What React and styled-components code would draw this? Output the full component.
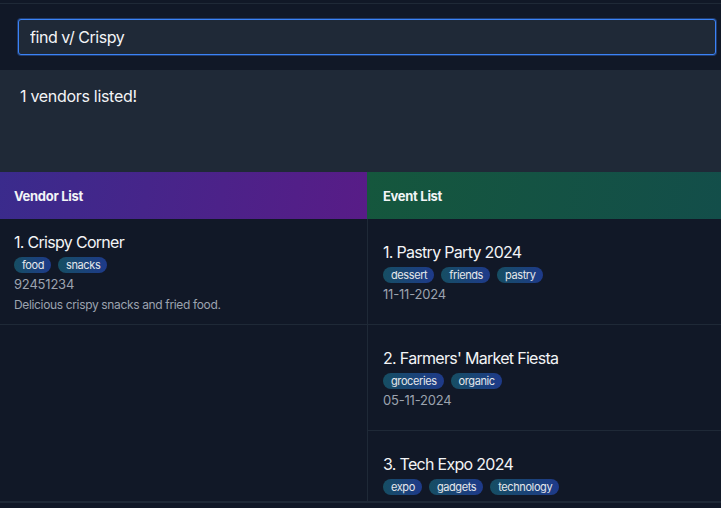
import React from "react";
import styled, { createGlobalStyle } from "styled-components";

const GlobalStyle = createGlobalStyle`
  body {
    margin: 0;
    background: #111827;
    font-family: Inter, "Noto Sans", "Liberation Sans", sans-serif;
  }
  * {
    box-sizing: border-box;
  }
`;

const vendors = [
  {
    name: "Crispy Corner",
    tags: ["food", "snacks"],
    phone: "92451234",
    description: "Delicious crispy snacks and fried food.",
  },
];

const events = [
  { name: "Pastry Party 2024", tags: ["dessert", "friends", "pastry"], date: "11-11-2024" },
  { name: "Farmers' Market Fiesta", tags: ["groceries", "organic"], date: "05-11-2024" },
  { name: "Tech Expo 2024", tags: ["expo", "gadgets", "technology"], date: "15-11-2024" },
];

const App = () => {
  return (
    <>
      <GlobalStyle />
      <Window>
        <MenuStrip />
        <CommandArea>
          <CommandInput defaultValue="find v/ Crispy" />
        </CommandArea>
        <ResultDisplay>1 vendors listed!</ResultDisplay>
        <Lists>
          <Column $width="367px">
            <Header $variant="vendor">Vendor List</Header>
            <CardList>
              {vendors.map((vendor, index) => (
                <Card key={vendor.name}>
                  <Title>
                    {index + 1}. {vendor.name}
                  </Title>
                  <Tags>
                    {vendor.tags.map((tag) => (
                      <Tag key={tag}>{tag}</Tag>
                    ))}
                  </Tags>
                  <Meta>{vendor.phone}</Meta>
                  <Description>{vendor.description}</Description>
                </Card>
              ))}
            </CardList>
          </Column>
          <Column $width="auto" $grow>
            <Header $variant="event">Event List</Header>
            <CardList $divider>
              {events.map((event, index) => (
                <Card key={event.name} $inset>
                  <Title>
                    {index + 1}. {event.name}
                  </Title>
                  <Tags>
                    {event.tags.map((tag) => (
                      <Tag key={tag}>{tag}</Tag>
                    ))}
                  </Tags>
                  <Meta>{event.date}</Meta>
                </Card>
              ))}
            </CardList>
          </Column>
        </Lists>
      </Window>
    </>
  );
};

const Window = styled.div`
  height: 508px;
  display: flex;
  flex-direction: column;
  color: #f3f4f6;
`;

const MenuStrip = styled.div`
  height: 4px;
  border-bottom: 1px solid #1f2937;
`;

const CommandArea = styled.div`
  padding: 15px 5px 15px 18px;
`;

const CommandInput = styled.input`
  display: block;
  width: 100%;
  height: 36px;
  padding: 0 10px 0 11px;
  background: #1f2937;
  border: 1px solid #3b82f6;
  border-radius: 3px;
  color: #f3f4f6;
  font-family: inherit;
  font-size: 16px;
  letter-spacing: -0.45px;
  outline: none;
  box-shadow: 0 0 0 1px rgba(59, 130, 246, 0.35);
`;

const ResultDisplay = styled.div`
  height: 102px;
  padding: 16px 20px;
  background: #1f2937;
  font-size: 16px;
  line-height: 20px;
  letter-spacing: -0.3px;
  color: #f3f4f6;
`;

const Lists = styled.div`
  flex: 1;
  display: flex;
  min-height: 0;
  border-bottom: 2px solid #1f2937;
  margin-bottom: 5px;
`;

const Column = styled.div`
  width: ${(p) => p.$width};
  flex: ${(p) => (p.$grow ? 1 : "none")};
  display: flex;
  flex-direction: column;
  min-height: 0;
`;

const Header = styled.div`
  height: 47px;
  display: flex;
  align-items: center;
  padding: 0 14px 0 ${(p) => (p.$variant === "event" ? "16px" : "14px")};
  font-size: 13px;
  font-weight: 700;
  letter-spacing: -0.3px;
  color: #f3f4f6;
  background: ${(p) =>
    p.$variant === "event"
      ? "linear-gradient(100deg, #15573d 0%, #134e4a 100%)"
      : "linear-gradient(100deg, #3a2b8c 0%, #581c87 100%)"};
`;

const CardList = styled.div`
  flex: 1;
  overflow: hidden;
  border-left: ${(p) => (p.$divider ? "1px solid #1f2937" : "none")};
`;

const Card = styled.div`
  min-height: 106px;
  padding: 13px 14px 11px ${(p) => (p.$inset ? "15px" : "14px")};
  display: flex;
  flex-direction: column;
  justify-content: center;
  border-bottom: 1px solid #1f2937;
`;

const Title = styled.div`
  font-size: 16px;
  line-height: 20px;
  color: #f3f4f6;
  letter-spacing: -0.7px;
`;

const Tags = styled.div`
  display: flex;
  gap: 7px;
  margin-top: 5px;
`;

const Tag = styled.span`
  height: 16px;
  padding: 0 7px 0 8px;
  border-radius: 8px;
  font-size: 11px;
  line-height: 16px;
  letter-spacing: -0.4px;
  color: #e5e7eb;
  background: linear-gradient(90deg, #164e63 0%, #1e3a8a 100%);
`;

const Meta = styled.div`
  margin-top: 3px;
  font-size: 13px;
  line-height: 17px;
  letter-spacing: -0.2px;
  color: #9ca3af;
`;

const Description = styled.div`
  margin-top: 4px;
  font-size: 12px;
  line-height: 16px;
  letter-spacing: -0.35px;
  color: #9ca3af;
`;

export default App;
